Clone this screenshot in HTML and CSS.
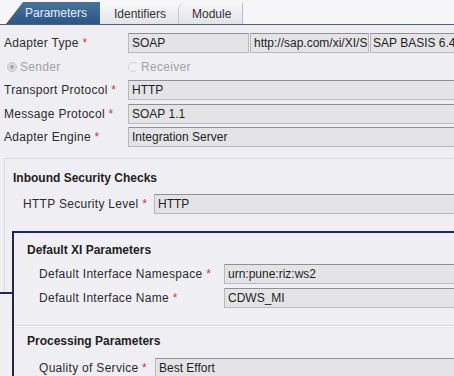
FILE: index.html
```html
<!DOCTYPE html>
<html>
<head>
<meta charset="utf-8">
<link rel="stylesheet" href="styles.css">
</head>
<body>
<div class="tabbar">
  <div class="tab tab-active">Parameters</div>
  <div class="tab tab-ident">Identifiers</div>
  <div class="tab tab-module">Module</div>
</div>

<div class="form">
  <div class="label">Adapter Type <span class="req">*</span></div>
  <div class="fields">
    <div class="field f-soap">SOAP</div>
    <div class="field f-ns">http://sap.com/xi/XI/S</div>
    <div class="field f-ver">SAP BASIS 6.4</div>
  </div>

  <div class="radio-cell"><span class="radio checked"></span>Sender</div>
  <div class="radio-cell rc-recv"><span class="radio"></span>Receiver</div>

  <div class="label">Transport Protocol <span class="req">*</span></div>
  <div class="field">HTTP</div>

  <div class="label">Message Protocol <span class="req">*</span></div>
  <div class="field">SOAP 1.1</div>

  <div class="label">Adapter Engine <span class="req">*</span></div>
  <div class="field">Integration Server</div>
</div>

<div class="inbound">
  <div class="group-title">Inbound Security Checks</div>
  <div class="row row-sec">
    <div class="label">HTTP Security Level <span class="req">*</span></div>
    <div class="field">HTTP</div>
  </div>

  <div class="frame">
    <div class="xi">
      <div class="group-title">Default XI Parameters</div>
      <div class="row row-xi row-first">
        <div class="label">Default Interface Namespace <span class="req">*</span></div>
        <div class="field">urn:pune:riz:ws2</div>
      </div>
      <div class="row row-xi row-next">
        <div class="label">Default Interface Name <span class="req">*</span></div>
        <div class="field">CDWS_MI</div>
      </div>
    </div>
    <div class="proc">
      <div class="group-title">Processing Parameters</div>
      <div class="row row-proc">
        <div class="label">Quality of Service <span class="req">*</span></div>
        <div class="field">Best Effort</div>
      </div>
    </div>
  </div>
</div>
</body>
</html>
```

FILE: styles.css
```css
html {
  overflow: hidden;
  background: #efeef3;
}

body {
  margin: 0;
  width: 480px;
  font-family: "Liberation Sans", Arial, sans-serif;
  font-size: 12px;
  color: #2b2b2e;
  background: #efeef3;
}

/* ---------- tabs ---------- */
.tabbar {
  display: flex;
  align-items: flex-end;
  height: 24px;
  padding-left: 6px;
  border-bottom: 1px solid #56616e;
  background: #f6f6f9;
}

.tab {
  box-sizing: border-box;
  height: 22px;
  line-height: 23px;
  white-space: nowrap;
}

.tab-active {
  width: 94px;
  padding-left: 19px;
  color: #e2ecf8;
  background: linear-gradient(#46729f, #2b5685);
  clip-path: polygon(17px 0, 100% 0, 100% 100%, 0 100%);
}

.tab-ident {
  width: 78px;
  height: 21px;
  line-height: 22px;
  padding-left: 14px;
  color: #333;
  background: linear-gradient(#f8f8fa, #e3e4e9);
}

.tab-module {
  width: 65px;
  height: 21px;
  line-height: 22px;
  padding-left: 13px;
  color: #333;
  border-left: 1px solid #c5c7ce;
  border-right: 1px solid #b7bac2;
  border-top-left-radius: 7px;
  background: linear-gradient(#f7f7fa, #e2e3e8);
}

/* ---------- main form ---------- */
.form {
  display: grid;
  grid-template-columns: 124px 1fr;
  grid-auto-rows: 20px;
  row-gap: 3.5px;
  align-items: center;
  padding: 8px 0 0 4px;
}

.label {
  line-height: 20px;
  white-space: nowrap;
  letter-spacing: 0.3px;
}

.req {
  color: #cc3b3b;
}

.fields {
  display: flex;
  gap: 1px;
}

.field {
  box-sizing: border-box;
  height: 20px;
  padding-left: 3px;
  line-height: 18px;
  white-space: nowrap;
  overflow: hidden;
  color: #1f1f22;
  background: #e4e4e7;
  border: 1px solid #b9b9bd;
  border-top-color: #8f8f94;
}

.f-soap { width: 121px; }
.f-ns { width: 119px; }
.f-ver {
  flex: 1;
  padding-left: 2px;
}

.radio-cell {
  display: flex;
  align-items: center;
  color: #a2a2a6;
  line-height: 20px;
  letter-spacing: 0.3px;
}

.radio {
  position: relative;
  box-sizing: border-box;
  width: 10px;
  height: 10px;
  margin: 0 3px;
  border-radius: 50%;
  border: 1px solid #cbcbcf;
  background: #f2f2f4;
}

.radio.checked {
  background: #dcdce0;
  border-color: #c4c4c8;
}

.radio.checked::after {
  content: "";
  position: absolute;
  inset: 2px;
  border-radius: 50%;
  background: #a6a6ab;
}

.rc-recv .radio {
  margin-left: 0;
  border-color: #d2d2d6;
  border-right-color: transparent;
}

/* ---------- groups ---------- */
.inbound {
  position: relative;
  margin: 11px 0 0 4px;
  padding: 12px 0 0 9px;
  border-top: 1px solid #d5d8e1;
}

.inbound::before {
  content: "";
  position: absolute;
  left: 0;
  top: 0;
  height: 134px;
  border-left: 1px solid #d9d9e0;
}

/* annotation stroke joining the highlight frame */
.inbound::after {
  content: "";
  position: absolute;
  left: -4px;
  top: 133px;
  width: 14px;
  height: 2px;
  background: #26245f;
}

.group-title {
  font-weight: bold;
  line-height: 14px;
  color: #222;
  white-space: nowrap;
}

.row {
  display: grid;
  align-items: center;
  height: 20px;
}

.row-sec {
  grid-template-columns: 131px 1fr;
  margin-top: 9px;
  padding-left: 10px;
}

.frame {
  margin: 17px 0 0 -1px;
  border-top: 2px solid #26245f;
  border-left: 2px solid #26245f;
  background: #f0eff4;
}

.xi {
  padding: 10px 0 17px 13px;
}

.row-xi {
  grid-template-columns: 185px 1fr;
  padding-left: 12px;
}

.row-first { margin-top: 7px; }
.row-next { margin-top: 4px; }

.proc {
  padding: 8px 0 0 13px;
  border-top: 1px solid #d9d9df;
  box-shadow: inset 0 1px 0 #fbfbfd, inset 0 2px 0 #e6e6eb;
  background: #efeef3;
}

.row-proc {
  grid-template-columns: 116px 1fr;
  margin-top: 10px;
  padding-left: 12px;
}
```
